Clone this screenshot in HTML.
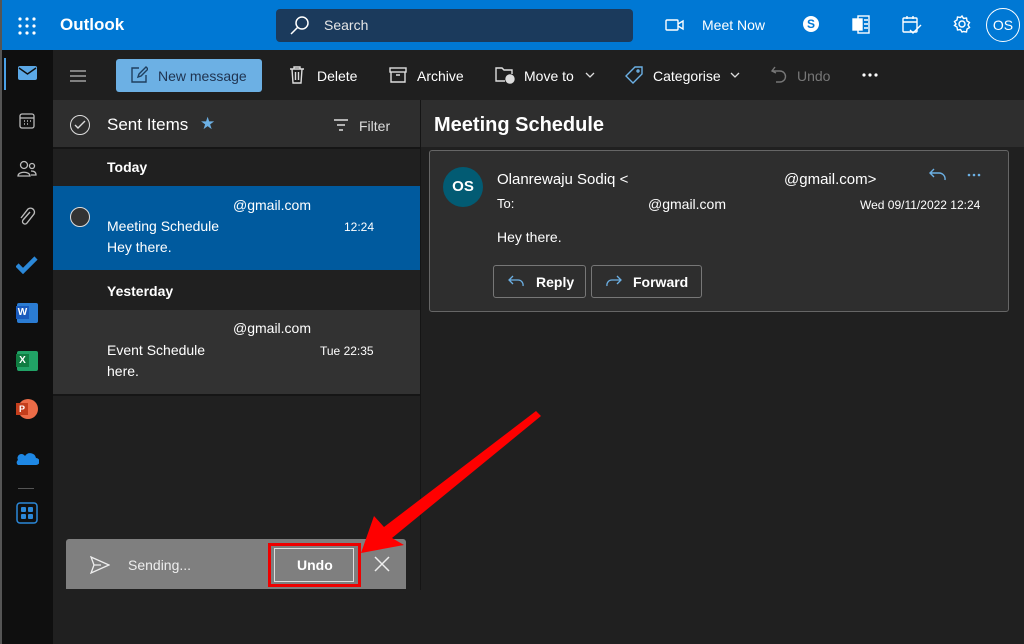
<!DOCTYPE html>
<html><head><meta charset="utf-8"><style>
*{margin:0;padding:0;box-sizing:border-box}
body{width:1024px;height:644px;overflow:hidden;background:#202020;font-family:"Liberation Sans",sans-serif;color:#fff;position:relative}
.a{position:absolute}
.t{font-size:14px;color:#fff;white-space:nowrap}
svg{position:absolute}
</style></head><body>
<div class="a" style="left:0;top:0;width:1024px;height:50px;background:#0078d4"></div>
<div class="a" style="left:0;top:0;width:2px;height:644px;background:#555"></div>
<svg style="left:18px;top:17px" width="18" height="18" fill="#fff"><circle cx="2" cy="2" r="1.6"/><circle cx="9" cy="2" r="1.6"/><circle cx="16" cy="2" r="1.6"/><circle cx="2" cy="9" r="1.6"/><circle cx="9" cy="9" r="1.6"/><circle cx="16" cy="9" r="1.6"/><circle cx="2" cy="16" r="1.6"/><circle cx="9" cy="16" r="1.6"/><circle cx="16" cy="16" r="1.6"/></svg>
<div class="a t" style="left:60px;top:15px;font-size:17px;font-weight:bold">Outlook</div>
<div class="a" style="left:276px;top:9px;width:357px;height:33px;background:#1b3a5c;border-radius:4px"></div>
<svg style="left:289px;top:15px" width="22" height="22" fill="none" stroke="#fff" stroke-width="1.5"><circle cx="13" cy="8" r="6"/><path d="M9 12 L2 19"/></svg>
<div class="a t" style="left:324px;top:17px;color:#e6e6e6">Search</div>
<svg style="left:665px;top:18px" width="20" height="14" fill="none" stroke="#fff" stroke-width="1.4"><rect x="1" y="2" width="12" height="10" rx="1"/><path d="M13 6 L18 3 V11 L13 8"/></svg>
<div class="a t" style="left:702px;top:17px">Meet Now</div>
<div class="a" style="left:803px;top:16px;width:16px;height:16px;border-radius:50%;background:#fff;color:#0078d4;font-size:12px;font-weight:bold;text-align:center;line-height:16px">S</div>
<svg style="left:852px;top:15px" width="18" height="19" fill="none" stroke="#fff" stroke-width="1.4"><rect x="1" y="4" width="9" height="11" fill="#fff"/><rect x="6" y="1" width="11" height="17"/><path d="M12 5h4M12 9h4M12 13h4"/></svg>
<svg style="left:902px;top:15px" width="20" height="20" fill="none" stroke="#fff" stroke-width="1.4"><rect x="1" y="3" width="14" height="14" rx="1"/><path d="M1 7h14M5 1v3M11 1v3M8 15l3 3 8-8"/></svg>
<svg style="left:952px;top:14px" width="20" height="20" fill="none" stroke="#fff" stroke-width="1.4"><circle cx="10" cy="10" r="3"/><path d="M10 2l1.5 2.5 3-.5.5 3 2.5 1.5-1.5 2.5 1.5 2.5-2.5 1.5-.5 3-3-.5L10 18l-1.5-2.5-3 .5-.5-3L2.5 11.5 4 10 2.5 7.5 5 6l.5-3 3 .5z"/></svg>
<div class="a" style="left:986px;top:8px;width:34px;height:34px;border:1px solid #fff;border-radius:50%;font-size:14px;text-align:center;line-height:32px">OS</div>

<div class="a" style="left:2px;top:50px;width:51px;height:594px;background:#0f0f0f"></div>
<div class="a" style="left:4px;top:58px;width:2px;height:32px;background:#4aa0e6"></div>
<svg style="left:18px;top:66px" width="20" height="15"><rect x="0" y="0" width="19" height="14" rx="2" fill="#5ba8e6"/><path d="M1 2l8.5 6 8.5-6" stroke="#0f0f0f" stroke-width="1.4" fill="none"/></svg>
<svg style="left:19px;top:113px" width="16" height="16" fill="none" stroke="#bbb" stroke-width="1.3"><rect x="1" y="1" width="14" height="14" rx="2"/><path d="M1 5h14"/><path d="M5 8h1M8 8h1M11 8h1M5 11h1M8 11h1" stroke-width="1.6"/></svg>
<svg style="left:17px;top:160px" width="20" height="18" fill="none" stroke="#bbb" stroke-width="1.3"><circle cx="7" cy="5" r="3.5"/><circle cx="15" cy="6" r="2.5"/><path d="M1 16c0-5 12-5 12 0zM14 11c4 0 5 2 5 4h-5"/></svg>
<svg style="left:18px;top:207px" width="18" height="20" fill="none" stroke="#bbb" stroke-width="1.4"><path d="M12 5L5 13a2.5 2.5 0 0 0 4 3l7-9a4 4 0 0 0-6-5L3 11"/></svg>
<svg style="left:16px;top:256px" width="22" height="18"><path d="M1 9l6 6 13-13" stroke="#2b88d8" stroke-width="4.5" fill="none"/></svg>
<div class="a" style="left:17px;top:303px;width:21px;height:20px;background:#2b7cd3;border-radius:2px"></div><div class="a" style="left:16px;top:306px;width:13px;height:13px;background:#185abd;font-size:10px;font-weight:bold;text-align:center;line-height:13px">W</div>
<div class="a" style="left:17px;top:351px;width:21px;height:20px;background:#21a366;border-radius:2px"></div><div class="a" style="left:16px;top:354px;width:13px;height:13px;background:#107c41;font-size:10px;font-weight:bold;text-align:center;line-height:13px">X</div>
<div class="a" style="left:18px;top:399px;width:20px;height:20px;background:#ed6c47;border-radius:50%"></div><div class="a" style="left:16px;top:403px;width:12px;height:12px;background:#c43e1c;font-size:9px;font-weight:bold;text-align:center;line-height:12px">P</div>
<svg style="left:15px;top:450px" width="24" height="16"><path d="M3 15h18a3 3 0 0 0 0-7 6 6 0 0 0-11-2 4 4 0 0 0-7 4 3 3 0 0 0 0 5z" fill="#1e88e5"/></svg>
<div class="a" style="left:18px;top:488px;width:16px;height:1px;background:#555"></div>
<svg style="left:16px;top:502px" width="22" height="22"><rect x="1" y="1" width="20" height="20" rx="3" fill="none" stroke="#2b88d8" stroke-width="1.5"/><rect x="5" y="5" width="5" height="5" rx="1" fill="#2b88d8"/><rect x="12" y="5" width="5" height="5" rx="1" fill="#2b88d8"/><rect x="5" y="12" width="5" height="5" rx="1" fill="#2b88d8"/><rect x="12" y="12" width="5" height="5" rx="1" fill="#2b88d8"/></svg>

<div class="a" style="left:53px;top:50px;width:971px;height:50px;background:#1f1f1f"></div>
<svg style="left:69px;top:70px" width="18" height="12" stroke="#bbb" stroke-width="1.3"><path d="M1 1h16M1 6h16M1 11h16"/></svg>
<div class="a" style="left:116px;top:59px;width:146px;height:33px;background:#6cb0e4;border-radius:3px"></div>
<svg style="left:130px;top:66px" width="18" height="18" fill="none" stroke="#1f3f5f" stroke-width="1.4"><path d="M9 2H2v14h14V9M8 11l1-3 7-7 2 2-7 7z"/></svg>
<div class="a t" style="left:158px;top:68px;color:#1f3350">New message</div>
<svg style="left:289px;top:66px" width="16" height="18" fill="none" stroke="#ddd" stroke-width="1.4"><path d="M1 3h14M5 3V1h6v2M3 3l1 14h8l1-14M6.5 6v8M9.5 6v8"/></svg>
<div class="a t" style="left:317px;top:68px">Delete</div>
<svg style="left:389px;top:67px" width="18" height="16" fill="none" stroke="#ddd" stroke-width="1.4"><rect x="1" y="1" width="16" height="4"/><path d="M2 5v10h14V5M7 8h4"/></svg>
<div class="a t" style="left:417px;top:68px">Archive</div>
<svg style="left:495px;top:66px" width="22" height="18" fill="none" stroke="#ddd" stroke-width="1.4"><path d="M10 15H1V2h6l2 2h8v4"/><circle cx="15" cy="13" r="4" fill="#ddd"/></svg>
<div class="a t" style="left:524px;top:68px">Move to</div>
<svg style="left:585px;top:72px" width="10" height="6" fill="none" stroke="#ddd" stroke-width="1.3"><path d="M1 1l4 4 4-4"/></svg>
<svg style="left:625px;top:66px" width="18" height="18" fill="none" stroke="#6cb0e4" stroke-width="1.4"><path d="M10 1h7v7L8 17 1 10z"/><circle cx="13" cy="5" r="1"/></svg>
<div class="a t" style="left:653px;top:68px">Categorise</div>
<svg style="left:730px;top:72px" width="10" height="6" fill="none" stroke="#ddd" stroke-width="1.3"><path d="M1 1l4 4 4-4"/></svg>
<svg style="left:771px;top:66px" width="16" height="18" fill="none" stroke="#777" stroke-width="1.4"><path d="M4 1L1 5l4 2M1 5h8a5 5 0 0 1 0 11H5"/></svg>
<div class="a t" style="left:797px;top:68px;color:#777">Undo</div>
<svg style="left:862px;top:73px" width="18" height="4" fill="#fff"><circle cx="2" cy="2" r="1.6"/><circle cx="8" cy="2" r="1.6"/><circle cx="14" cy="2" r="1.6"/></svg>

<div class="a" style="left:53px;top:100px;width:367px;height:47px;background:#2e2e2e"></div>
<div class="a" style="left:53px;top:147px;width:367px;height:2px;background:#151515"></div>
<div class="a" style="left:70px;top:115px;width:20px;height:20px;border:1.5px solid #ddd;border-radius:50%"></div>
<svg style="left:74px;top:120px" width="12" height="10" fill="none" stroke="#ddd" stroke-width="1.4"><path d="M1 5l3 3 7-7"/></svg>
<div class="a t" style="left:107px;top:115px;font-size:17px">Sent Items</div>
<div class="a t" style="left:200px;top:114px;font-size:17px;color:#6cb0e4">★</div>
<svg style="left:333px;top:119px" width="16" height="12" stroke="#ddd" stroke-width="1.4"><path d="M1 1h14M4 6h8M6 11h4"/></svg>
<div class="a t" style="left:359px;top:118px;color:#ddd">Filter</div>
<div class="a" style="left:420px;top:100px;width:1px;height:490px;background:#151515"></div>
<div class="a" style="left:421px;top:100px;width:603px;height:47px;background:#2e2e2e"></div>
<div class="a t" style="left:434px;top:114px;font-size:20px;font-weight:bold">Meeting Schedule</div>

<div class="a t" style="left:107px;top:159px;font-weight:bold">Today</div>
<div class="a" style="left:53px;top:186px;width:367px;height:84px;background:#005a9e"></div>
<div class="a" style="left:70px;top:207px;width:20px;height:20px;border:1.5px solid #ddd;border-radius:50%;background:#333"></div>
<div class="a t" style="left:233px;top:197px">@gmail.com</div>
<div class="a t" style="left:107px;top:218px">Meeting Schedule</div>
<div class="a t" style="left:344px;top:220px;font-size:12px">12:24</div>
<div class="a t" style="left:107px;top:239px">Hey there.</div>
<div class="a t" style="left:107px;top:283px;font-weight:bold">Yesterday</div>
<div class="a" style="left:53px;top:310px;width:367px;height:84px;background:#323232"></div>
<div class="a" style="left:53px;top:394px;width:367px;height:2px;background:#151515"></div>
<div class="a t" style="left:233px;top:320px">@gmail.com</div>
<div class="a t" style="left:107px;top:342px">Event Schedule</div>
<div class="a t" style="left:320px;top:344px;font-size:12px">Tue 22:35</div>
<div class="a t" style="left:107px;top:363px">here.</div>

<div class="a" style="left:429px;top:150px;width:580px;height:162px;background:#2e2e2e;border:1px solid #666;border-radius:3px"></div>
<div class="a" style="left:443px;top:167px;width:40px;height:40px;border-radius:50%;background:#025b73;font-size:15px;font-weight:bold;text-align:center;line-height:40px">OS</div>
<div class="a t" style="left:497px;top:171px;font-size:15px">Olanrewaju Sodiq &lt;</div>
<div class="a t" style="left:784px;top:171px;font-size:15px">@gmail.com&gt;</div>
<svg style="left:929px;top:168px" width="18" height="14" fill="none" stroke="#6cb0e4" stroke-width="1.4"><path d="M5 1L1 5l4 4M1 5h9a6 6 0 0 1 6 7"/></svg>
<svg style="left:967px;top:173px" width="14" height="4" fill="#6cb0e4"><circle cx="2" cy="2" r="1.3"/><circle cx="7" cy="2" r="1.3"/><circle cx="12" cy="2" r="1.3"/></svg>
<div class="a t" style="left:497px;top:196px;font-size:13px">To:</div>
<div class="a t" style="left:648px;top:196px">@gmail.com</div>
<div class="a t" style="left:860px;top:198px;font-size:12px">Wed 09/11/2022 12:24</div>
<div class="a t" style="left:497px;top:229px">Hey there.</div>
<div class="a" style="left:493px;top:265px;width:93px;height:33px;border:1px solid #777;border-radius:3px"></div>
<svg style="left:508px;top:275px" width="16" height="12" fill="none" stroke="#6cb0e4" stroke-width="1.3"><path d="M5 1L1 5l4 4M1 5h9a5 5 0 0 1 5 6"/></svg>
<div class="a t" style="left:536px;top:274px;font-weight:bold">Reply</div>
<div class="a" style="left:591px;top:265px;width:111px;height:33px;border:1px solid #777;border-radius:3px"></div>
<svg style="left:606px;top:275px" width="16" height="12" fill="none" stroke="#6cb0e4" stroke-width="1.3"><path d="M11 1l4 4-4 4M15 5H6a5 5 0 0 0-5 6"/></svg>
<div class="a t" style="left:633px;top:274px;font-weight:bold">Forward</div>

<div class="a" style="left:66px;top:539px;width:340px;height:50px;background:#7f7f7f;border-radius:3px 3px 0 0"></div>
<svg style="left:90px;top:556px" width="20" height="18" fill="none" stroke="#eee" stroke-width="1.3"><path d="M1 1l18 8-18 8 3-8z M4 9h7"/></svg>
<div class="a t" style="left:128px;top:557px;color:#eee">Sending...</div>
<div class="a" style="left:268px;top:543px;width:93px;height:44px;border:3px solid #e00"></div>
<div class="a" style="left:274px;top:548px;width:80px;height:34px;border:1px solid #ddd;background:#7f7f7f"></div>
<div class="a t" style="left:297px;top:557px;font-weight:bold">Undo</div>
<svg style="left:374px;top:556px" width="16" height="16" stroke="#eee" stroke-width="1.5"><path d="M1 1l14 14M15 1L1 15"/></svg>

<svg style="left:0;top:0" width="1024" height="644"><path d="M361 553 L374 516 L384 527 L536 411 L541 416 L392 538 L404 545 Z" fill="#ff0000"/></svg>
</body></html>
